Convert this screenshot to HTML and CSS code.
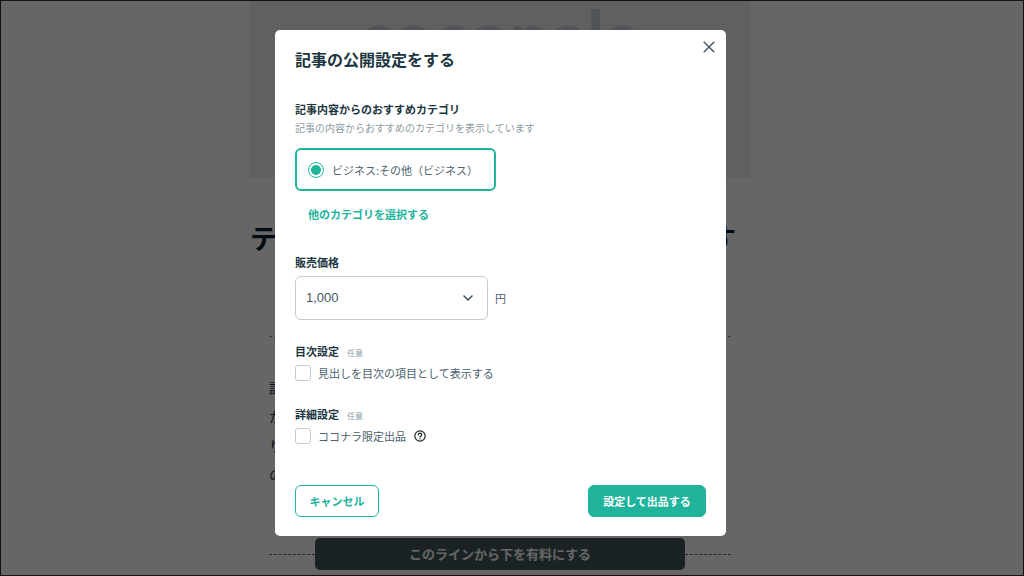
FILE: index.html
```html
<!DOCTYPE html>
<html lang="ja">
<head>
  <meta charset="UTF-8" />
  <meta name="viewport" content="width=device-width, initial-scale=1.0"/>
  <title>記事の公開設定をする</title>
  <link rel="stylesheet" href="styles.css">
</head>
<body>
  <main class="article">
    <div class="article-hero">coconala</div>
    <h1 class="article-title">テスト記事のタイトルをここに入れます</h1>
    <div class="article-body">
      <hr class="dashed">
      <p class="article-text">
        記事の本文をここに書いていきます。<br>
        かんたんな内容でも問題ありません。<br>
        りんごの育て方について紹介します。<br>
        のちほど続きを追加する予定です。
      </p>
      <div class="paid-line">
        <button type="button" class="paid-button">このラインから下を有料にする</button>
      </div>
    </div>
  </main>

  <div class="overlay">
    <form class="modal" role="dialog" aria-modal="true" aria-labelledby="modalTitle">
      <button type="button" class="close-button" aria-label="閉じる">
        <svg width="12" height="12" viewBox="0 0 12 12" fill="none" stroke="#4c626d" stroke-width="1.6" stroke-linecap="round">
          <path d="M1.2 1.2l9.6 9.6M10.8 1.2l-9.6 9.6"/>
        </svg>
      </button>

      <h2 class="modal-title" id="modalTitle">記事の公開設定をする</h2>

      <section class="category">
        <h3>記事内容からのおすすめカテゴリ</h3>
        <p class="description">記事の内容からおすすめのカテゴリを表示しています</p>
        <label class="category-option">
          <input type="radio" name="category" checked>
          <span>ビジネス:その他（ビジネス）</span>
        </label>
        <a href="#" class="category-link">他のカテゴリを選択する</a>
      </section>

      <section class="price">
        <h3><label for="price">販売価格</label></h3>
        <div class="price-row">
          <div class="select-box">
            <select id="price" name="price">
              <option>1,000</option>
            </select>
            <svg class="chevron" width="12" height="8" viewBox="0 0 12 8" fill="none" stroke="#3f5560" stroke-width="1.6" stroke-linecap="round" stroke-linejoin="round">
              <path d="M2 2l4 4 4-4"/>
            </svg>
          </div>
          <span class="unit">円</span>
        </div>
      </section>

      <section class="setting">
        <h3>目次設定<span class="optional">任意</span></h3>
        <div class="check-row">
          <label><input type="checkbox" name="toc">見出しを目次の項目として表示する</label>
        </div>
      </section>

      <section class="setting">
        <h3>詳細設定<span class="optional">任意</span></h3>
        <div class="check-row">
          <label><input type="checkbox" name="limited">ココナラ限定出品</label>
          <button type="button" class="help-button" aria-label="ヘルプ">
            <svg width="12" height="12" viewBox="0 0 12 12" fill="none" stroke="#1c2529" stroke-width="1.2" stroke-linecap="round">
              <circle cx="6" cy="6" r="5.2"/>
              <path d="M4.4 4.8c0-2.2 3.3-2.1 3.3-.1 0 1.2-1.6 1.2-1.6 2.4"/>
              <circle cx="6.1" cy="8.9" r=".7" fill="#1c2529" stroke="none"/>
            </svg>
          </button>
        </div>
      </section>

      <footer class="modal-footer">
        <button type="button" class="button button-outline">キャンセル</button>
        <button type="submit" class="button button-primary">設定して出品する</button>
      </footer>
    </form>
  </div>
</body>
</html>
```

FILE: styles.css
```css
* {
  margin: 0;
  padding: 0;
  box-sizing: border-box;
}

body {
  font-family: 'Noto Sans CJK JP', sans-serif;
  font-size: 11px;
  line-height: 20px;
  color: #4c626d;
  background-color: #fff;
  height: 100vh;
  overflow: hidden;
}

button,
select {
  font: inherit;
  cursor: pointer;
}

/* article editor behind the dialog */
.article {
  padding: 0 24px 0 0;
}

.article-hero,
.article-title,
.article-body {
  width: 100%;
  max-width: 500px;
  margin: 0 auto;
}

.article-hero {
  height: 178px;
  background-color: #f0f0f8;
  color: #c8d2d6;
  font-family: Lato, sans-serif;
  font-size: 72px;
  font-weight: bold;
  line-height: 70px;
  text-align: center;
}

.article-title {
  margin-top: 40px;
  color: #00202c;
  font-size: 27px;
  line-height: 40px;
  white-space: nowrap;
}

.article-body {
  padding: 78px 19px 0;
}

.dashed {
  border: none;
  border-top: 1px dashed #8f979b;
}

.article-text {
  margin-top: 36px;
  color: #1c3038;
  font-size: 14px;
  line-height: 29px;
}

.paid-line {
  display: flex;
  align-items: center;
  margin-top: 49px;
}

.paid-line::before,
.paid-line::after {
  content: '';
  flex: 1;
  border-top: 1px dashed #5f676b;
}

.paid-button {
  width: 80%;
  height: 32px;
  border: none;
  border-radius: 5px;
  background-color: #41555a;
  color: #fff;
  font-size: 13px;
  font-weight: bold;
}

/* dialog */
.overlay {
  position: fixed;
  inset: 0;
  padding: 29px 24px 0 1px;
  border: 1px solid #111;
  background-color: rgba(0, 0, 0, 0.6);
}

.modal {
  position: relative;
  width: 100%;
  max-width: 451px;
  margin: 0 auto;
  padding: 17px 20px 19px;
  border-radius: 5px;
  background-color: #fff;
}

.close-button {
  position: absolute;
  top: 5px;
  right: 5px;
  width: 24px;
  height: 24px;
  border: none;
  background: none;
}

.close-button svg,
.help-button svg {
  display: block;
  margin: 0 auto;
}

.modal-title {
  color: #1b3541;
  font-size: 16px;
  line-height: 24px;
}

h3 {
  color: #1b3541;
  font-size: 11px;
  line-height: 20px;
}

.category,
.price {
  margin-top: 28px;
}

.description {
  color: #8d9ba2;
  font-size: 10px;
  line-height: 18px;
}

.category-option {
  display: flex;
  align-items: center;
  gap: 8px;
  width: 201px;
  height: 43px;
  margin-top: 11px;
  padding: 0 11px;
  border: 2px solid #20b49c;
  border-radius: 6px;
  white-space: nowrap;
}

input[type="radio"] {
  appearance: none;
  width: 16px;
  height: 16px;
  border: 1px solid #20b49c;
  border-radius: 50%;
  background-color: #20b49c;
  background-clip: content-box;
  padding: 2px;
}

.category-link {
  display: inline-block;
  margin: 13px 0 0 13px;
  color: #20b49c;
  font-weight: bold;
  text-decoration: none;
  vertical-align: top;
}

.price-row {
  display: flex;
  align-items: center;
  gap: 7px;
  margin-top: 4px;
}

.select-box {
  position: relative;
  width: 193px;
}

select {
  appearance: none;
  display: block;
  width: 100%;
  height: 44px;
  padding: 0 10px;
  border: 1px solid #c3cbd0;
  border-radius: 6px;
  background-color: #fff;
  color: #3f5560;
  font-family: 'Liberation Sans', sans-serif;
  font-size: 13px;
}

.chevron {
  position: absolute;
  top: 18px;
  right: 14px;
  pointer-events: none;
}

.setting {
  margin-top: 21px;
}

.optional {
  margin-left: 8px;
  color: #8d9ba2;
  font-size: 8px;
  font-weight: normal;
  line-height: 1;
}

.check-row {
  display: flex;
  align-items: center;
  gap: 8px;
  height: 20px;
  margin-top: 2px;
}

.check-row label {
  display: flex;
  align-items: center;
  gap: 7px;
}

input[type="checkbox"] {
  appearance: none;
  width: 16px;
  height: 16px;
  border: 1px solid #c3cbd0;
  border-radius: 3px;
  background-color: #fff;
}

.help-button {
  border: none;
  background: none;
}

.modal-footer {
  display: flex;
  justify-content: space-between;
  margin-top: 39px;
}

.button {
  height: 32px;
  padding: 0 13px;
  border: 1px solid #20b49c;
  border-radius: 6px;
  font-weight: bold;
}

.button-outline {
  min-width: 84px;
  background-color: #fff;
  color: #20b49c;
}

.button-primary {
  min-width: 118px;
  background-color: #20b49c;
  color: #fff;
}
```
